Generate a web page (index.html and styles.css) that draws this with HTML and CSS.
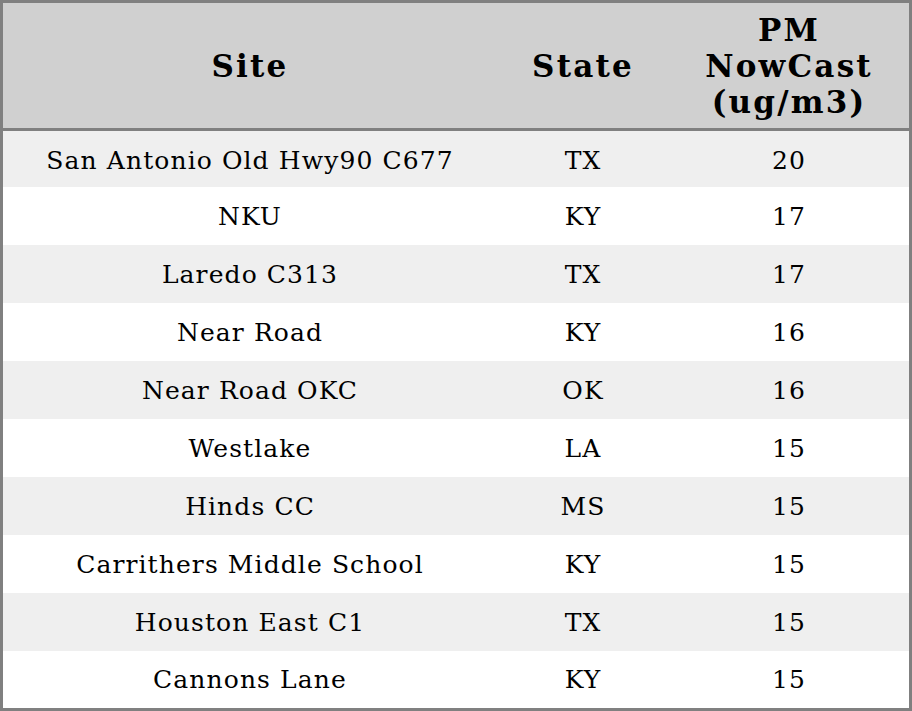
FILE: index.html
```html
<!DOCTYPE html>
<html>
<head>
<meta charset="utf-8">
<link rel="stylesheet" href="styles.css">
</head>
<body>
<table class="aq">
  <colgroup>
    <col class="c-site">
    <col class="c-state">
    <col class="c-pm">
  </colgroup>
  <thead>
    <tr>
      <th>Site</th>
      <th>State</th>
      <th>PM<br>NowCast<br>(ug/m3)</th>
    </tr>
  </thead>
  <tbody>
    <tr><td>San Antonio Old Hwy90 C677</td><td>TX</td><td>20</td></tr>
    <tr><td>NKU</td><td>KY</td><td>17</td></tr>
    <tr><td>Laredo C313</td><td>TX</td><td>17</td></tr>
    <tr><td>Near Road</td><td>KY</td><td>16</td></tr>
    <tr><td>Near Road OKC</td><td>OK</td><td>16</td></tr>
    <tr><td>Westlake</td><td>LA</td><td>15</td></tr>
    <tr><td>Hinds CC</td><td>MS</td><td>15</td></tr>
    <tr><td>Carrithers Middle School</td><td>KY</td><td>15</td></tr>
    <tr><td>Houston East C1</td><td>TX</td><td>15</td></tr>
    <tr><td>Cannons Lane</td><td>KY</td><td>15</td></tr>
  </tbody>
</table>
</body>
</html>
```

FILE: styles.css
```css
html, body {
  margin: 0;
  padding: 0;
  background: #ffffff;
}

.aq {
  width: 912px;
  border-collapse: separate;
  border-spacing: 0;
  border: 3px solid #808080;
  table-layout: fixed;
  font-family: "DejaVu Serif", serif;
  color: #000000;
}

.c-site { width: 494px; }
.c-state { width: 172px; }
.c-pm { width: 240px; }

.aq th {
  background: #d0d0d0;
  font-size: 31px;
  font-weight: bold;
  line-height: 36px;
  letter-spacing: 2.2px;
  height: 125px;
  padding: 0;
  text-align: center;
  vertical-align: middle;
  border-bottom: 3px solid #808080;
  box-sizing: content-box;
}

.aq td {
  font-size: 25px;
  line-height: 29px;
  letter-spacing: 1.1px;
  height: 58px;
  padding: 0;
  text-align: center;
  vertical-align: middle;
  box-sizing: border-box;
}

.aq tbody tr:nth-child(odd) td {
  background: #efefef;
}

.aq tbody tr:first-child td {
  height: 56px;
  padding-top: 2px;
}

.aq tbody tr:last-child td {
  height: 57px;
}
```
